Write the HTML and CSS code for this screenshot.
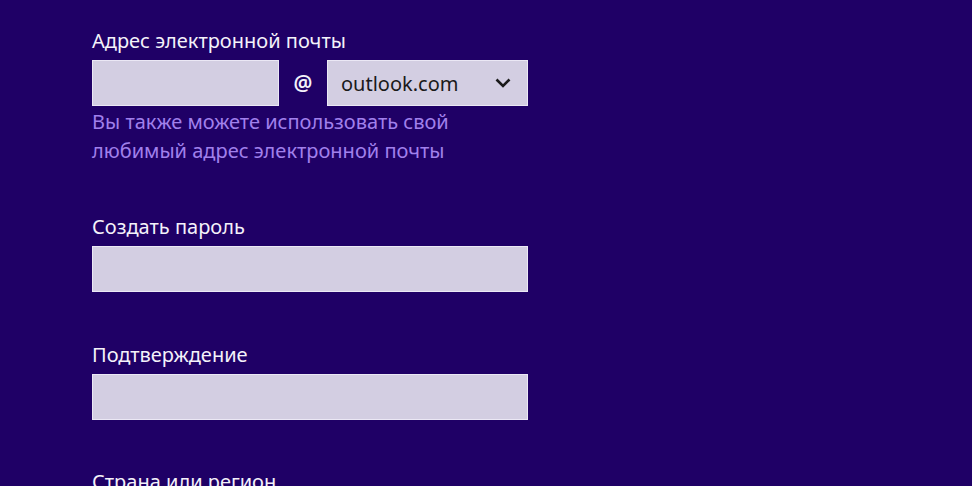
FILE: index.html
```html
<!DOCTYPE html>
<html lang="ru">

<head>
    <meta charset="UTF-8">
    <title>Учетная запись</title>
    <link rel="stylesheet" href="styles.css">
</head>

<body>
    <div class="form">
        <div class="field">
            <label for="email">Адрес электронной почты</label>
            <div class="email-row">
                <input type="text" id="email" class="box email-box">
                <span class="at">@</span>
                <div class="box select">
                    <span>outlook.com</span>
                    <svg width="16" height="10" viewBox="0 0 16 10">
                        <path d="M1.5 1.5 L8 8 L14.5 1.5" fill="none" stroke="#1a1a1a" stroke-width="2.6" />
                    </svg>
                </div>
            </div>
            <p class="hint">Вы также можете использовать свой<br>любимый адрес электронной почты</p>
        </div>

        <div class="field">
            <label for="pass">Создать пароль</label>
            <input type="password" id="pass" class="box wide">
        </div>

        <div class="field">
            <label for="pass2">Подтверждение</label>
            <input type="password" id="pass2" class="box wide">
        </div>

        <div class="field">
            <label for="country">Страна или регион</label>
        </div>
    </div>
</body>

</html>
```

FILE: styles.css
```css
body {
    margin: 0;
    padding: 27px 0 0 92px;
    background: #1f0066;
    font-family: "Noto Sans", "Open Sans", sans-serif;
    color: #fff;
    height: 100vh;
    box-sizing: border-box;
    overflow: hidden;
}

.form {
    width: 436px;
}

.field {
    margin-bottom: 48px;
}

label {
    display: block;
    font-size: 20px;
    line-height: 28px;
    margin-bottom: 5px;
    color: #f4f2fa;
}

.box {
    display: block;
    height: 46px;
    box-sizing: border-box;
    border: 1px solid #ebe8f5;
    background: #d3cee2;
    margin: 0;
    padding: 0 12px;
    font-family: inherit;
    font-size: 20px;
    color: #1a1a1a;
    outline: none;
}

.wide {
    width: 100%;
}

.email-row {
    display: flex;
    align-items: center;
}

.email-box {
    width: 187px;
}

.at {
    width: 48px;
    text-align: center;
    font-size: 21px;
    font-weight: 600;
    color: #f4f2fa;
}

.select {
    flex: 1;
    display: flex;
    align-items: center;
    justify-content: space-between;
    padding: 0 16px 0 13px;
}

.hint {
    margin: 1px 0 0;
    font-size: 20px;
    line-height: 29px;
    color: #a180ec;
}

.field:nth-child(3) {
    padding-top: 1px;
}
```
